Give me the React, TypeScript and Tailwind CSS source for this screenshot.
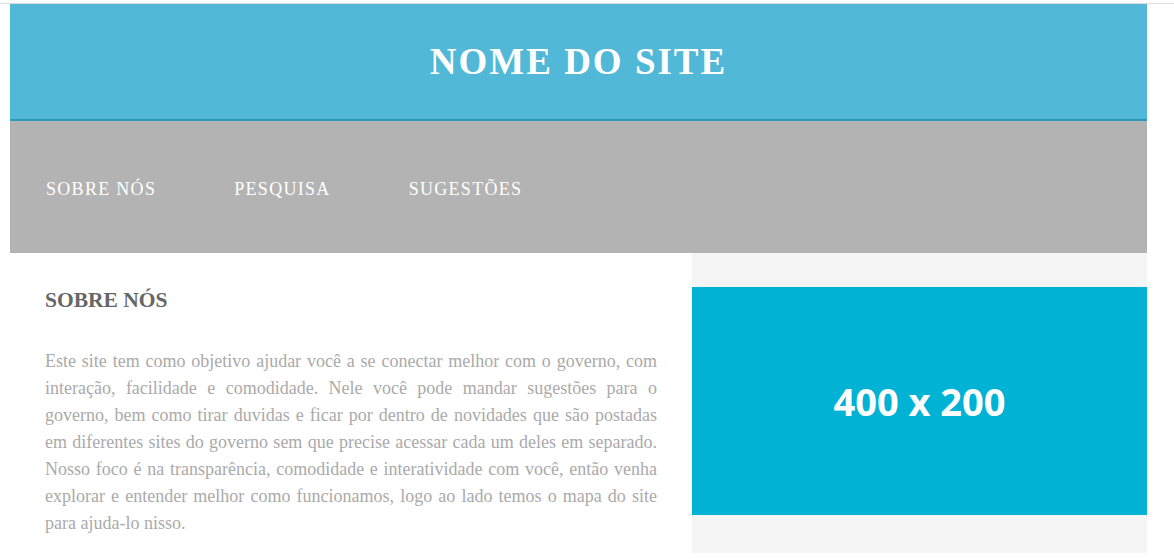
import React from "react";

export default function App() {
  const serif = { fontFamily: '"Liberation Serif", "Times New Roman", serif' };
  return (
    <div className="w-[1174px] h-[559px] bg-white overflow-hidden" style={serif}>
      <div className="h-[3px] bg-white" />
      <div className="h-px bg-[#dcdcdc]" />
      <div className="ml-[10px] w-[1137px]">
        <header className="h-[115px] bg-[#52b8d7] flex items-center justify-center">
          <h1 className="text-white font-bold text-[37px] tracking-[2px] leading-none font-['Liberation_Serif',serif]">
            NOME DO SITE
          </h1>
        </header>
        <div className="h-[2px] bg-[#2a9ab8]" />
        <nav className="h-[132px] bg-[#b3b3b3] flex items-center pl-[36px] pt-[4px] gap-[78px]">
          {["SOBRE NÓS", "PESQUISA", "SUGESTÕES"].map((t) => (
            <a key={t} className="text-white text-[18px] tracking-[1.3px] font-['Liberation_Serif',serif]">
              {t}
            </a>
          ))}
        </nav>
        <div className="flex h-[300px]">
          <section className="w-[682px] px-[35px] pt-[33px]">
            <h2 className="text-[#666] font-bold text-[21.5px] leading-[28px] font-['Liberation_Serif',serif]">
              SOBRE NÓS
            </h2>
            <p className="mt-[34px] text-[#aaa] text-[18px] leading-[27px] text-justify font-['Liberation_Serif',serif]">
              Este site tem como objetivo ajudar você a se conectar melhor com o governo, com interação,
              facilidade e comodidade. Nele você pode mandar sugestões para o governo, bem como tirar
              duvidas e ficar por dentro de novidades que são postadas em diferentes sites do governo sem
              que precise acessar cada um deles em separado. Nosso foco é na transparência, comodidade e
              interatividade com você, então venha explorar e entender melhor como funcionamos, logo ao
              lado temos o mapa do site para ajuda-lo nisso.
            </p>
          </section>
          <aside className="w-[455px] bg-[#f5f5f5] pt-[34px]">
            <div className="h-[228px] bg-[#00b3d4] flex items-center justify-center">
              <span className="text-white font-bold text-[38px] font-['Open_Sans',sans-serif]">
                400 x 200
              </span>
            </div>
          </aside>
        </div>
      </div>
    </div>
  );
}
